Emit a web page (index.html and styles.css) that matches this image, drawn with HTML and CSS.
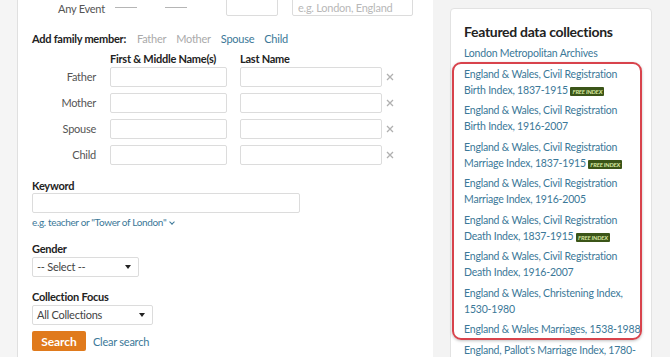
FILE: index.html
```html
<!DOCTYPE html>
<html lang="en">
<head>
    <meta charset="UTF-8">
    <meta name="viewport" content="width=device-width, initial-scale=1.0">
    <title>Search records</title>
    <link rel="stylesheet" href="styles.css">
</head>
<body>

<div class="page">
    <div class="gutter"></div>

    <main class="search-panel">
        <div class="event-row">
            <span class="event-label">Any Event</span>
            <span class="dash first"></span>
            <span class="dash"></span>
            <input class="year-input" type="text">
            <input class="place-input" type="text" placeholder="e.g. London, England">
        </div>

        <div class="family-add">
            <span class="family-title">Add family member:</span>
            <a class="muted">Father</a>
            <a class="muted">Mother</a>
            <a>Spouse</a>
            <a>Child</a>
        </div>

        <div class="name-heads">
            <span class="col-head first-col">First &amp; Middle Name(s)</span>
            <span class="col-head">Last Name</span>
        </div>

        <div class="family-grid">
            <label>Father</label>
            <input type="text">
            <div class="last-cell"><input type="text"><svg class="remove" viewBox="0 0 8 8"><path d="M1 1L7 7M7 1L1 7"/></svg></div>

            <label>Mother</label>
            <input type="text">
            <div class="last-cell"><input type="text"><svg class="remove" viewBox="0 0 8 8"><path d="M1 1L7 7M7 1L1 7"/></svg></div>

            <label>Spouse</label>
            <input type="text">
            <div class="last-cell"><input type="text"><svg class="remove" viewBox="0 0 8 8"><path d="M1 1L7 7M7 1L1 7"/></svg></div>

            <label>Child</label>
            <input type="text">
            <div class="last-cell"><input type="text"><svg class="remove" viewBox="0 0 8 8"><path d="M1 1L7 7M7 1L1 7"/></svg></div>
        </div>

        <div class="field">
            <div class="field-label">Keyword</div>
            <input class="keyword-input" type="text">
            <a class="hint">e.g. teacher or "Tower of London" <span class="chev"></span></a>
        </div>

        <div class="field">
            <div class="field-label">Gender</div>
            <div class="select gender-select">-- Select --<span class="caret"></span></div>
        </div>

        <div class="field">
            <div class="field-label">Collection Focus</div>
            <div class="select focus-select">All Collections<span class="caret"></span></div>
        </div>

        <div class="actions">
            <button class="search-btn">Search</button>
            <a class="clear-link">Clear search</a>
        </div>
    </main>

    <aside class="sidebar">
        <div class="card">
            <h3>Featured data collections</h3>
            <ul class="collections">
                <li><a>London Metropolitan Archives</a></li>
                <li><a>England &amp; Wales, Civil Registration<br>Birth Index, 1837-1915</a> <span class="free">FREE INDEX</span></li>
                <li><a>England &amp; Wales, Civil Registration<br>Birth Index, 1916-2007</a></li>
                <li><a>England &amp; Wales, Civil Registration<br>Marriage Index, 1837-1915</a> <span class="free">FREE INDEX</span></li>
                <li><a>England &amp; Wales, Civil Registration<br>Marriage Index, 1916-2005</a></li>
                <li><a>England &amp; Wales, Civil Registration<br>Death Index, 1837-1915</a> <span class="free">FREE INDEX</span></li>
                <li><a>England &amp; Wales, Civil Registration<br>Death Index, 1916-2007</a></li>
                <li><a>England &amp; Wales, Christening Index,<br>1530-1980</a></li>
                <li><a>England &amp; Wales Marriages, 1538-1988</a></li>
                <li><a>England, Pallot's Marriage Index, 1780-<br>1837</a></li>
            </ul>
            <div class="highlight"></div>
        </div>
    </aside>
</div>

</body>
</html>
```

FILE: styles.css
```css
body {
    margin: 0;
    background-color: #f3f3f3;
    font-family: Lato, "Liberation Sans", sans-serif;
    letter-spacing: -0.25px;
    color: #333;
}

a {
    color: #3b7898;
    text-decoration: none;
    cursor: pointer;
}

input {
    box-sizing: border-box;
    height: 20px;
    margin: 0;
    border: 1px solid #dcdcdc;
    border-radius: 2px;
    background: white;
    font-family: inherit;
}

.page {
    display: flex;
    height: 357px;
    overflow: hidden;
}

.gutter {
    width: 17px;
    background-color: #f5f5f5;
    border-right: 1px solid #e0e0e0;
}

.search-panel {
    width: 401px;
    padding-left: 14px;
    background: white;
}

/* event row, partly scrolled out of view */
.event-row {
    display: flex;
    align-items: center;
    height: 22px;
    margin-top: -6px;
}

.event-label {
    width: 44px;
    margin-left: 26px;
    margin-top: 6px;
    white-space: nowrap;
    font-size: 11px;
    color: #555;
}

.dash {
    width: 22px;
    margin-left: 28px;
    margin-top: 4px;
    border-top: 1px solid #b5b5b5;
}

.dash.first {
    margin-left: 13px;
}

.year-input {
    width: 52px;
    height: 22px;
    margin-left: 39px;
}

.place-input {
    width: 121px;
    height: 22px;
    margin-left: 14px;
    padding: 5px 0 0 5px;
    font-size: 11px;
    letter-spacing: -0.25px;
}

.place-input::placeholder {
    color: #b8b8b8;
}

.family-add {
    display: flex;
    gap: 10px;
    margin-top: 15px;
    line-height: 16px;
    font-size: 11px;
}

.family-title {
    font-weight: bold;
    color: #222;
    margin-right: 1px;
}

.family-add .muted {
    color: #aaa;
}

.name-heads {
    display: flex;
    margin-top: 5px;
    line-height: 14px;
    font-size: 11px;
    font-weight: bold;
    color: #222;
}

.col-head.first-col {
    margin-left: 78px;
    width: 130px;
}

.family-grid {
    display: grid;
    grid-template-columns: 64px 117px 160px;
    column-gap: 14px;
    row-gap: 6px;
    margin-top: 1px;
}

.family-grid label {
    text-align: right;
    font-size: 11px;
    line-height: 20px;
    color: #555;
}

.last-cell {
    display: flex;
    align-items: center;
    margin-left: -1px;
}

.last-cell input {
    width: 142px;
}

.remove {
    width: 8px;
    height: 8px;
    margin-left: 4px;
    fill: none;
    stroke: #b0b0b0;
    stroke-width: 1.3;
}

.field-label {
    font-size: 11px;
    line-height: 14px;
    font-weight: bold;
    color: #222;
}

.field {
    margin-top: 13px;
}

.family-grid + .field {
    margin-top: 14px;
}

.keyword-input {
    display: block;
    width: 268px;
}

.hint {
    display: block;
    margin-top: 2px;
    line-height: 14px;
    font-size: 10px;
    letter-spacing: -0.35px;
}

.chev {
    display: inline-block;
    width: 3px;
    height: 3px;
    margin-left: 2px;
    border-right: 1.5px solid #3b7898;
    border-bottom: 1.5px solid #3b7898;
    transform: translateY(-2px) rotate(45deg);
}

.select {
    position: relative;
    box-sizing: border-box;
    height: 20px;
    margin-top: 1px;
    padding-left: 4px;
    border: 1px solid #dcdcdc;
    border-radius: 2px;
    font-size: 11px;
    line-height: 18px;
    color: #444;
}

.gender-select {
    width: 107px;
}

.focus-select {
    width: 121px;
}

.caret {
    position: absolute;
    right: 7px;
    top: 7px;
    border-left: 3.5px solid transparent;
    border-right: 3.5px solid transparent;
    border-top: 4px solid #222;
}

.actions {
    display: flex;
    align-items: center;
    gap: 7px;
    margin-top: 6px;
}

.search-btn {
    width: 54px;
    height: 20px;
    padding: 0;
    border: none;
    border-radius: 2px;
    background-color: #e07a1c;
    color: white;
    font-family: inherit;
    font-size: 12px;
    font-weight: bold;
    letter-spacing: -0.1px;
}

.clear-link {
    font-size: 11px;
}

/* sidebar */
.sidebar {
    margin-left: 17px;
    padding-top: 8px;
}

.card {
    position: relative;
    box-sizing: border-box;
    width: 202px;
    height: 400px;
    padding: 14px 8px 0 13px;
    background: white;
    border: 1px solid #e2e2e2;
    border-radius: 4px;
}

.card h3 {
    margin: 0;
    font-size: 14px;
    line-height: 18px;
    letter-spacing: -0.3px;
    color: #222;
}

.collections {
    list-style: none;
    margin: 4px 0 0 0;
    padding: 0;
    font-size: 10.5px;
    letter-spacing: -0.2px;
    line-height: 16px;
    white-space: nowrap;
}

.collections li {
    margin-bottom: 4.5px;
}

.free {
    display: inline-block;
    padding: 0 2px;
    background-color: #3b5518;
    color: #d8e8a0;
    font-size: 6px;
    line-height: 9px;
    letter-spacing: -0.2px;
    font-weight: bold;
    font-style: italic;
    vertical-align: 0;
    border-radius: 1px;
}

.highlight {
    position: absolute;
    left: 1px;
    top: 53px;
    width: 186px;
    height: 274px;
    border: 2px solid #d8434c;
    border-radius: 9px;
    box-shadow: 0 1px 3px rgba(0, 0, 0, 0.25);
}
```
